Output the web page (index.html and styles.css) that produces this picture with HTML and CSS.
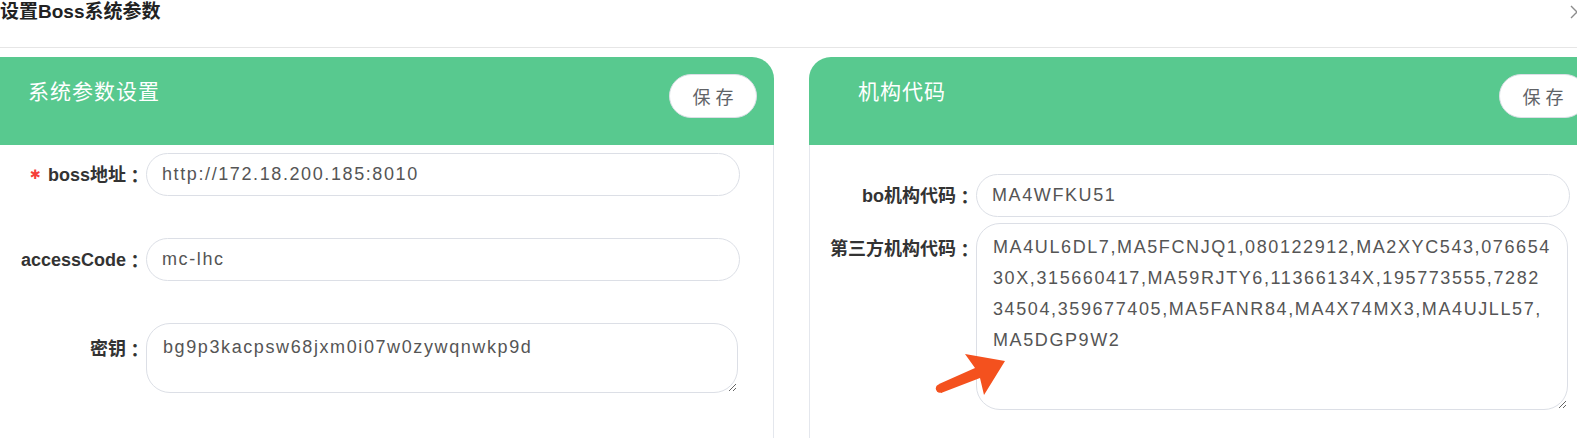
FILE: index.html
```html
<!DOCTYPE html>
<html lang="zh-CN">
<head>
    <meta charset="UTF-8">
    <meta name="viewport" content="width=device-width, initial-scale=1.0">
    <title>设置Boss系统参数</title>
    <link rel="stylesheet" href="styles.css">
</head>
<body>
    <div class="dialog">
        <div class="dialog-header">
            <span class="dialog-title">设置Boss系统参数</span>
            <span class="dialog-close">
                <svg width="16" height="16" viewBox="0 0 16 16"><path d="M2 2 L14 14 M14 2 L2 14" stroke="#8c8c8c" stroke-width="1.4" fill="none"/></svg>
            </span>
        </div>

        <div class="panels">
            <div class="card">
                <div class="card-header">
                    <span class="card-title">系统参数设置</span>
                    <button class="btn-save">保 存</button>
                </div>
                <div class="card-body">
                    <div class="form-item">
                        <label class="form-label"><span class="required">✱</span><span>boss地址</span><span class="colon">：</span></label>
                        <input class="form-input" type="text" value="http://172.18.200.185:8010">
                    </div>
                    <div class="form-item">
                        <label class="form-label"><span>accessCode</span><span class="colon">：</span></label>
                        <input class="form-input" type="text" value="mc-lhc">
                    </div>
                    <div class="form-item area">
                        <label class="form-label"><span>密钥</span><span class="colon">：</span></label>
                        <textarea class="form-textarea short">bg9p3kacpsw68jxm0i07w0zywqnwkp9d</textarea>
                    </div>
                </div>
            </div>

            <div class="card">
                <div class="card-header">
                    <span class="card-title">机构代码</span>
                    <button class="btn-save">保 存</button>
                </div>
                <div class="card-body compact">
                    <div class="form-item">
                        <label class="form-label"><span>bo机构代码</span><span class="colon">：</span></label>
                        <input class="form-input" type="text" value="MA4WFKU51">
                    </div>
                    <div class="form-item area">
                        <label class="form-label"><span>第三方机构代码</span><span class="colon">：</span></label>
                        <textarea class="form-textarea tall">MA4UL6DL7,MA5FCNJQ1,080122912,MA2XYC543,07665430X,315660417,MA59RJTY6,11366134X,195773555,728234504,359677405,MA5FANR84,MA4X74MX3,MA4UJLL57,MA5DGP9W2</textarea>
                    </div>
                    <!-- annotation arrow -->
                    <svg class="mark-arrow" width="80" height="50" viewBox="0 0 80 50">
                        <polygon points="74,11 34,4 44,18 8,34 10,43 49,28 53,45" fill="#f4511e"/>
                        <circle cx="9" cy="38.5" r="4.2" fill="#f4511e"/>
                    </svg>
                </div>
            </div>
        </div>
    </div>
</body>
</html>
```

FILE: styles.css
```css
* {
    box-sizing: border-box;
}
html, body {
    margin: 0;
    overflow: hidden;
    background-color: #fff;
}
body {
    font-family: "Liberation Sans", "Noto Sans CJK SC", sans-serif;
    color: #333;
}
.dialog-header {
    display: flex;
    justify-content: space-between;
    align-items: flex-start;
    height: 48px;
    border-bottom: 1px solid #e6e6e6;
}
.dialog-title {
    font-size: 19px;
    font-weight: bold;
    line-height: 24px;
    color: #222;
}
.dialog-close {
    margin-top: 4px;
    margin-right: -8px;
}
.panels {
    display: flex;
    gap: 35px;
    margin-top: 9px;
    margin-left: -21px;
}
.card {
    flex: 0 0 795px;
}
.card-header {
    display: flex;
    justify-content: space-between;
    align-items: flex-start;
    height: 88px;
    padding: 17px 17px 0 49px;
    background-color: #58c98f;
    border-radius: 22px 22px 0 0;
}
.card-title {
    color: #fff;
    font-size: 21px;
    line-height: 36px;
    letter-spacing: 1px;
}
.btn-save {
    width: 88px;
    height: 44px;
    border: 1px solid #dcdfe6;
    border-radius: 22px;
    background-color: #fff;
    color: #606266;
    font-family: inherit;
    font-size: 18px;
    cursor: pointer;
}
.card-body {
    position: relative;
    height: 320px;
    padding-top: 8px;
    border: 1px solid #e4e7ed;
    border-top: none;
}
.card-body.compact {
    padding-top: 29px;
}
.form-item {
    display: flex;
    align-items: flex-start;
    margin-bottom: 42px;
}
.compact .form-item {
    margin-bottom: 6px;
}
.form-label {
    display: flex;
    justify-content: flex-end;
    align-items: center;
    flex: 0 0 166px;
    height: 43px;
    padding-right: 2px;
    font-size: 18px;
    font-weight: bold;
    line-height: 1;
    color: #333;
    white-space: nowrap;
}
.colon {
    font-family: "Noto Sans CJK TC", sans-serif;
}
.form-item.area .form-label {
    height: 47px;
    padding-top: 4px;
}
.required {
    color: #f5403a;
    font-family: "DejaVu Sans", sans-serif;
    font-size: 13px;
    margin-right: 7px;
}
.form-input,
.form-textarea {
    border: 1px solid #dcdfe6;
    background-color: #fff;
    color: #555;
    font-family: "Liberation Sans", sans-serif;
    font-size: 18px;
    letter-spacing: 1.6px;
    outline: none;
}
.form-input {
    width: 594px;
    height: 43px;
    padding: 0 15px;
    border-radius: 22px;
}
.form-textarea {
    width: 592px;
    padding: 8px 16px;
    line-height: 31px;
    border-radius: 24px;
    resize: vertical;
}
.form-textarea.short {
    height: 70px;
}
.form-textarea.tall {
    height: 187px;
}
.mark-arrow {
    position: absolute;
    left: 121px;
    top: 205px;
}
```
